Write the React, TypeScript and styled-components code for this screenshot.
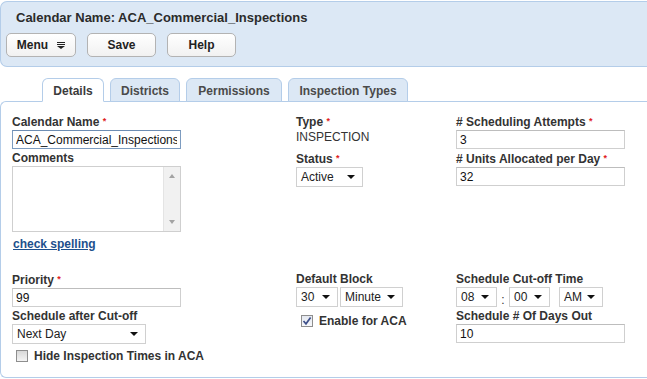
import * as React from 'react';
import styled, { createGlobalStyle } from 'styled-components';

const GlobalStyle = createGlobalStyle`
  body {
    margin: 0;
    background: #ffffff;
    font-family: 'Liberation Sans', Arial, sans-serif;
    overflow: hidden;
  }
`;

export default function App() {
  return (
    <Page>
      <GlobalStyle />
      <Header>
        <Title>Calendar Name: ACA_Commercial_Inspections</Title>
        <Toolbar>
          <ToolButton $width={70}>
            Menu
            <MenuIcon width="8" height="7" viewBox="0 0 8 7">
              <rect x="0" y="0" width="8" height="1" fill="#222" />
              <rect x="0" y="2" width="8" height="1" fill="#222" />
              <polygon points="0,4 8,4 4,7" fill="#222" />
            </MenuIcon>
          </ToolButton>
          <ToolButton $width={69}>Save</ToolButton>
          <ToolButton $width={69}>Help</ToolButton>
        </Toolbar>
      </Header>

      <TabBar>
        <Tab $active $width={62}>Details</Tab>
        <Tab $width={70}>Districts</Tab>
        <Tab $width={96}>Permissions</Tab>
        <Tab $width={120}>Inspection Types</Tab>
      </TabBar>

      <Panel>
        <FormRow>
          <Column>
            <Field>
              <Label>
                Calendar Name <Req>*</Req>
              </Label>
              <TextInput $width={169} $focused defaultValue="ACA_Commercial_Inspections" />
            </Field>
            <Field>
              <Label>Comments</Label>
              <TextAreaBox>
                <TextArea />
                <ScrollTrack>
                  <Arrow $dir="up" />
                  <Arrow $dir="down" />
                </ScrollTrack>
              </TextAreaBox>
            </Field>
            <SpellLink href="#">check spelling</SpellLink>
          </Column>

          <Column>
            <Field>
              <Label>
                Type <Req>*</Req>
              </Label>
              <StaticValue>INSPECTION</StaticValue>
            </Field>
            <Field>
              <Label>
                Status <Req>*</Req>
              </Label>
              <SelectBox $width={67}>
                Active
                <Caret />
              </SelectBox>
            </Field>
          </Column>

          <Column>
            <Field>
              <Label>
                # Scheduling Attempts <Req>*</Req>
              </Label>
              <TextInput $width={169} defaultValue="3" />
            </Field>
            <Field>
              <Label>
                # Units Allocated per Day <Req>*</Req>
              </Label>
              <TextInput $width={169} defaultValue="32" />
            </Field>
          </Column>
        </FormRow>

        <FormRow $spaced>
          <Column>
            <Field>
              <Label>
                Priority <Req>*</Req>
              </Label>
              <TextInput $width={169} defaultValue="99" />
            </Field>
            <Field>
              <Label>Schedule after Cut-off</Label>
              <SelectBox $width={134}>
                Next Day
                <Caret />
              </SelectBox>
            </Field>
            <CheckRow $indent={4} $top={3}>
              <CheckBox />
              Hide Inspection Times in ACA
            </CheckRow>
          </Column>

          <Column>
            <Field>
              <Label>Default Block</Label>
              <SelectGroup>
                <SelectBox $width={42}>
                  30
                  <Caret />
                </SelectBox>
                <SelectBox $width={63}>
                  Minute
                  <Caret />
                </SelectBox>
              </SelectGroup>
            </Field>
            <CheckRow $indent={5} $top={5}>
              <CheckBox $checked>
                <svg width="10" height="10" viewBox="0 0 10 10">
                  <path d="M1.5 5 L4 7.8 L8.6 1.6" fill="none" stroke="#3d4f8a" strokeWidth="1.7" />
                </svg>
              </CheckBox>
              Enable for ACA
            </CheckRow>
          </Column>

          <Column>
            <Field>
              <Label>Schedule Cut-off Time</Label>
              <SelectGroup>
                <SelectBox $width={41}>
                  08
                  <Caret />
                </SelectBox>
                <TimeColon>:</TimeColon>
                <SelectBox $width={41}>
                  00
                  <Caret />
                </SelectBox>
                <Spacer />
                <SelectBox $width={44}>
                  AM
                  <Caret />
                </SelectBox>
              </SelectGroup>
            </Field>
            <Field>
              <Label>Schedule # Of Days Out</Label>
              <TextInput $width={169} defaultValue="10" />
            </Field>
          </Column>
        </FormRow>
      </Panel>
    </Page>
  );
}

const Page = styled.div`
  width: 670px;
  padding-top: 1px;
`;

const Header = styled.div`
  box-sizing: border-box;
  height: 66px;
  background: #dce8f5;
  border: 1px solid #b4cde9;
  border-right: none;
  border-radius: 7px 0 0 7px;
  padding: 8px 0 0 5px;
`;

const Title = styled.div`
  font-size: 13px;
  font-weight: bold;
  line-height: 16px;
  color: #2b2b2b;
  padding-left: 10px;
`;

const Toolbar = styled.div`
  display: flex;
  gap: 11px;
  margin-top: 7px;
`;

const ToolButton = styled.div<{ $width: number }>`
  box-sizing: border-box;
  width: ${({ $width }) => $width}px;
  height: 24px;
  display: flex;
  align-items: center;
  justify-content: center;
  gap: 9px;
  border: 1px solid #b3b3b3;
  border-radius: 5px;
  background: linear-gradient(#ffffff, #f1f1f1);
  font-size: 12px;
  font-weight: bold;
  color: #222;
`;

const MenuIcon = styled.svg`
  display: block;
  margin-top: 1px;
`;

const TabBar = styled.div`
  display: flex;
  align-items: flex-end;
  gap: 6px;
  margin-top: 11px;
  padding-left: 42px;
  position: relative;
  z-index: 1;
`;

const Tab = styled.div<{ $active?: boolean; $width: number }>`
  box-sizing: border-box;
  width: ${({ $width }) => $width}px;
  height: 24px;
  padding-top: 1px;
  display: flex;
  align-items: center;
  justify-content: center;
  font-size: 12px;
  font-weight: bold;
  color: ${({ $active }) => ($active ? '#3b3b3b' : '#4a4a4a')};
  background: ${({ $active }) => ($active ? '#ffffff' : '#dce8f5')};
  border: 1px solid #b4cde9;
  border-bottom-color: ${({ $active }) => ($active ? '#ffffff' : '#b4cde9')};
  border-radius: 6px 6px 0 0;
  margin-bottom: -1px;
`;

const Panel = styled.div`
  box-sizing: border-box;
  height: 277px;
  border: 1px solid #b4cde9;
  border-right: none;
  border-radius: 6px 0 0 6px;
  padding: 12px 0 0 11px;
`;

const FormRow = styled.div<{ $spaced?: boolean }>`
  display: grid;
  grid-template-columns: 284px 160px 200px;
  margin-top: ${({ $spaced }) => ($spaced ? '21px' : '0')};
`;

const Column = styled.div`
  display: flex;
  flex-direction: column;
  align-items: flex-start;
  gap: 2px;
`;

const Field = styled.div`
  display: flex;
  flex-direction: column;
  align-items: flex-start;
`;

const Label = styled.div`
  font-size: 12px;
  font-weight: bold;
  line-height: 14px;
  color: #333;
  margin-bottom: 1px;
  white-space: nowrap;
`;

const Req = styled.span`
  color: #e0201b;
  font-size: 9px;
  vertical-align: 2px;
`;

const TextInput = styled.input<{ $width: number; $focused?: boolean }>`
  box-sizing: border-box;
  width: ${({ $width }) => $width}px;
  height: 19px;
  margin: 0;
  padding: 0 3px;
  border: 1px solid ${({ $focused }) => ($focused ? '#7d9cc0' : '#cfcfcf')};
  border-top-color: ${({ $focused }) => ($focused ? '#6d8db3' : '#bdbdbd')};
  font-family: 'Liberation Sans', Arial, sans-serif;
  font-size: 12px;
  color: #111;
  outline: none;
`;

const TextAreaBox = styled.div`
  box-sizing: border-box;
  width: 169px;
  height: 66px;
  display: flex;
  border: 1px solid #cfcfcf;
`;

const TextArea = styled.textarea`
  flex: 1;
  border: none;
  resize: none;
  outline: none;
  margin: 0;
  padding: 2px;
`;

const ScrollTrack = styled.div`
  width: 16px;
  background: #f1f1f1;
  border-left: 1px solid #e4e4e4;
  display: flex;
  flex-direction: column;
  justify-content: space-between;
  align-items: center;
  padding: 7px 0 7px;
`;

const Arrow = styled.div<{ $dir: 'up' | 'down' }>`
  width: 0;
  height: 0;
  border-left: 3.5px solid transparent;
  border-right: 3.5px solid transparent;
  ${({ $dir }) =>
    $dir === 'up' ? 'border-bottom: 4px solid #a3a3a3;' : 'border-top: 4px solid #a3a3a3;'}
`;

const SpellLink = styled.a`
  font-size: 12px;
  font-weight: bold;
  line-height: 14px;
  color: #1d4f8c;
  text-decoration: underline;
  margin-top: 3px;
  margin-left: 1px;
`;

const StaticValue = styled.div`
  font-size: 12px;
  line-height: 14px;
  color: #333;
  margin-bottom: 5px;
`;

const SelectGroup = styled.div`
  display: flex;
  align-items: flex-end;
  gap: 2px;
`;

const SelectBox = styled.div<{ $width: number }>`
  box-sizing: border-box;
  width: ${({ $width }) => $width}px;
  height: 20px;
  display: flex;
  align-items: center;
  justify-content: space-between;
  padding: 0 7px 0 4px;
  border: 1px solid #d0d0d0;
  background: #ffffff;
  font-size: 12px;
  color: #222;
`;

const Caret = styled.span`
  width: 0;
  height: 0;
  border-left: 4px solid transparent;
  border-right: 4px solid transparent;
  border-top: 4px solid #111;
`;

const TimeColon = styled.span`
  width: 8px;
  text-align: center;
  font-size: 12px;
  line-height: 14px;
  color: #333;
`;

const Spacer = styled.span`
  width: 5px;
`;

const CheckRow = styled.label<{ $indent: number; $top: number }>`
  display: flex;
  align-items: center;
  gap: 6px;
  line-height: 14px;
  margin-top: ${({ $top }) => $top}px;
  margin-left: ${({ $indent }) => $indent}px;
  font-size: 12px;
  font-weight: bold;
  color: #333;
`;

const CheckBox = styled.span<{ $checked?: boolean }>`
  box-sizing: border-box;
  width: 12px;
  height: 12px;
  display: flex;
  align-items: center;
  justify-content: center;
  border: 1px solid #8e8e8e;
  background: ${({ $checked }) =>
    $checked ? 'linear-gradient(#e4e8f0, #f7f8fb)' : 'linear-gradient(#d8d8d8, #f4f4f4)'};
`;
